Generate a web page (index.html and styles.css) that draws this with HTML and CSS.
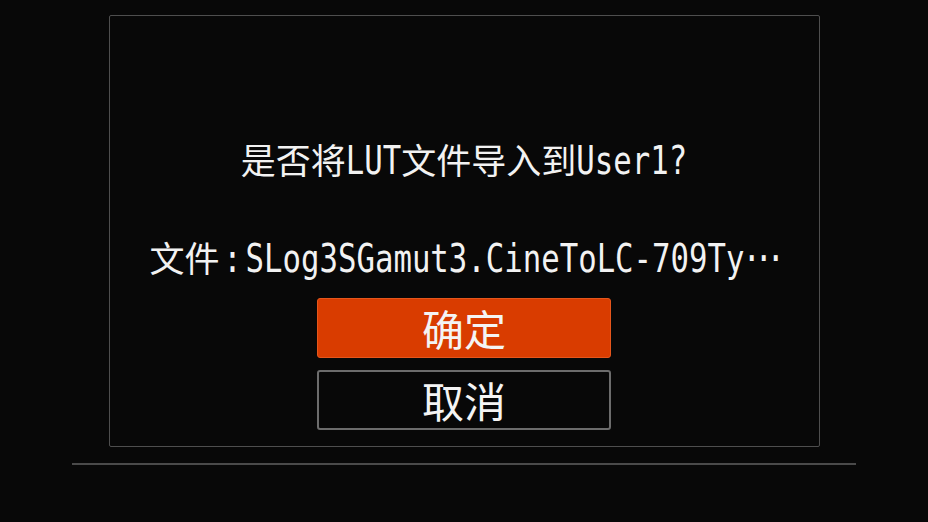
FILE: index.html
```html
<!DOCTYPE html>
<html lang="zh-CN">
<head>
<meta charset="utf-8">
<title>LUT</title>
<link rel="stylesheet" href="styles.css">
</head>
<body>
<div class="screen">
  <div class="dialog">
    <p class="msg title">是否将<span class="lat">LUT</span>文件导入到<span class="lat">User1?</span></p>
    <p class="msg file">文件<span class="lat colon">:</span><span class="lat">SLog3SGamut3.CineToLC-709Ty</span><span class="lat dots">···</span></p>
    <div class="btn btn-ok">确定</div>
    <div class="btn btn-cancel">取消</div>
  </div>
  <div class="rule"></div>
</div>
</body>
</html>
```

FILE: styles.css
```css
html, body {
  margin: 0;
  background: #080808;
}
body {
  width: 928px;
  height: 522px;
  overflow: hidden;
  color: #f2f2f2;
  font-family: "Noto Sans CJK SC", sans-serif;
}
.screen {
  display: flex;
  flex-direction: column;
  align-items: center;
  padding-top: 15px;
}
.dialog {
  box-sizing: border-box;
  width: 711px;
  height: 432px;
  border: 1px solid #4e4e4e;
  border-radius: 2px;
  display: flex;
  flex-direction: column;
  align-items: center;
}
.msg {
  margin: 0;
  height: 40px;
  line-height: 40px;
  font-size: 35px;
  white-space: nowrap;
}
.title {
  margin-top: 123px;
}
.file {
  margin-top: 58px;
}
.lat {
  display: inline-block;
  font-family: "DejaVu Sans Mono", monospace;
  font-size: 30.7px;
  line-height: 40px;
  transform: scaleY(1.3);
  transform-origin: 50% 30.6px;
}
.colon {
  width: 26px;
  text-align: center;
}
.dots {
  letter-spacing: -6.5px;
  margin-left: -2px;
}
.btn {
  box-sizing: border-box;
  width: 294px;
  height: 60px;
  border-radius: 3px;
  display: flex;
  align-items: center;
  justify-content: center;
  font-size: 42px;
  line-height: 1;
  color: #f4f4f4;
}
.btn-ok {
  margin-top: 21px;
  background: #d93c00;
  border: 1px solid #e5561c;
}
.btn-cancel {
  margin-top: 12px;
  border: 2px solid #6c6c6c;
}
.rule {
  width: 784px;
  height: 2px;
  background: #4a4a4a;
  margin-top: 16px;
}
```
